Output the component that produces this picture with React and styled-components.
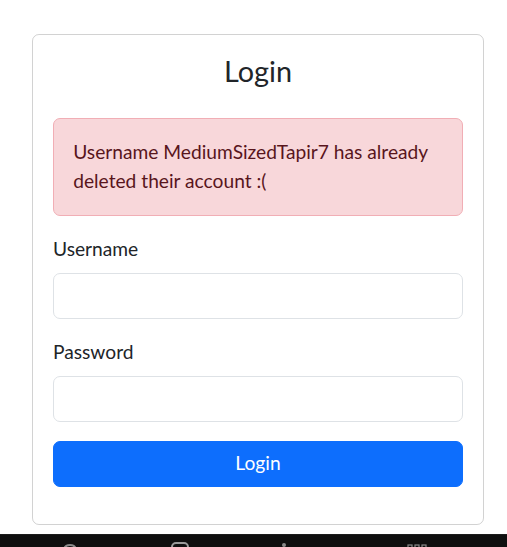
import React, { useState } from 'react';
import styled, { createGlobalStyle } from 'styled-components';

const GlobalStyle = createGlobalStyle`
  html, body {
    margin: 0;
    padding: 0;
    background: #fff;
  }
  body {
    font-family: Lato, "Noto Sans", sans-serif;
    font-size: 19.2px;
    line-height: 1.5;
    color: #212529;
  }
  * {
    box-sizing: border-box;
  }
`;

const Page = styled.div`
  display: flex;
  flex-direction: column;
  min-height: 100vh;
`;

const Main = styled.main`
  flex: 1;
  padding: 34px 0 9px 32px;
`;

const Card = styled.form`
  width: 452px;
  border: 1px solid rgba(0, 0, 0, 0.175);
  border-radius: 7px;
  padding: 19px 20px 18px;
`;

const Title = styled.h4`
  margin: 0 0 29px;
  font-size: 28.8px;
  font-weight: 400;
  line-height: 1.2;
  text-align: center;
`;

const Alert = styled.div`
  background: #f8d7da;
  border: 1px solid #f1aeb5;
  border-radius: 7px;
  color: #58151c;
  padding: 19.2px;
  margin-bottom: 19.2px;
`;

const Field = styled.div`
  margin-bottom: 19.2px;
`;

const Label = styled.label`
  display: block;
  margin-bottom: 9.6px;
`;

const Input = styled.input`
  display: block;
  width: 100%;
  height: 45.6px;
  padding: 7.2px 14.4px;
  font: inherit;
  border: 1px solid #dee2e6;
  border-radius: 7px;
  background: #fff;
  outline: none;
`;

const Button = styled.button`
  display: block;
  width: 100%;
  height: 45.6px;
  border: 1px solid #0d6efd;
  border-radius: 7px;
  background: #0d6efd;
  color: #fff;
  font: inherit;
  cursor: pointer;
  margin-bottom: 19.2px;
`;

const NavBar = styled.div`
  height: 14px;
  background: #0f0f0f;
  border-top: 1px solid #1c1c1c;
  display: flex;
  align-items: flex-start;
  overflow: hidden;
`;

const NavIcon = styled.svg`
  flex: none;
  margin-left: ${(p) => p.$offset}px;
  margin-top: ${(p) => p.$top}px;
`;

export default function App() {
  const [username, setUsername] = useState('');
  const [password, setPassword] = useState('');

  return (
    <Page>
      <GlobalStyle />
      <Main>
        <Card onSubmit={(e) => e.preventDefault()}>
          <Title>Login</Title>
          <Alert>Username MediumSizedTapir7 has already deleted their account :(</Alert>
          <Field>
            <Label htmlFor="username">Username</Label>
            <Input id="username" value={username} onChange={(e) => setUsername(e.target.value)} />
          </Field>
          <Field>
            <Label htmlFor="password">Password</Label>
            <Input id="password" type="password" value={password} onChange={(e) => setPassword(e.target.value)} />
          </Field>
          <Button type="submit">Login</Button>
        </Card>
      </Main>
      <NavBar>
        <NavIcon $offset={62} $top={8} width="16" height="16" viewBox="0 0 16 16">
          <path d="M2 8 Q2 2 8 2 Q14 2 14 8" fill="none" stroke="#8a8a8a" strokeWidth="2" />
        </NavIcon>
        <NavIcon $offset={93} $top={7} width="18" height="18" viewBox="0 0 18 18">
          <rect x="1" y="1" width="16" height="16" rx="4" fill="none" stroke="#9a9a9a" strokeWidth="2" />
        </NavIcon>
        <NavIcon $offset={92} $top={7} width="6" height="6" viewBox="0 0 6 6">
          <circle cx="3" cy="3" r="2" fill="#8a8a8a" />
        </NavIcon>
        <NavIcon $offset={120} $top={9} width="20" height="12" viewBox="0 0 20 12">
          <rect x="1" y="1" width="4" height="10" fill="none" stroke="#8a8a8a" strokeWidth="1.2" />
          <rect x="8" y="1" width="4" height="10" fill="none" stroke="#8a8a8a" strokeWidth="1.2" />
          <rect x="15" y="1" width="4" height="10" fill="none" stroke="#8a8a8a" strokeWidth="1.2" />
        </NavIcon>
      </NavBar>
    </Page>
  );
}
